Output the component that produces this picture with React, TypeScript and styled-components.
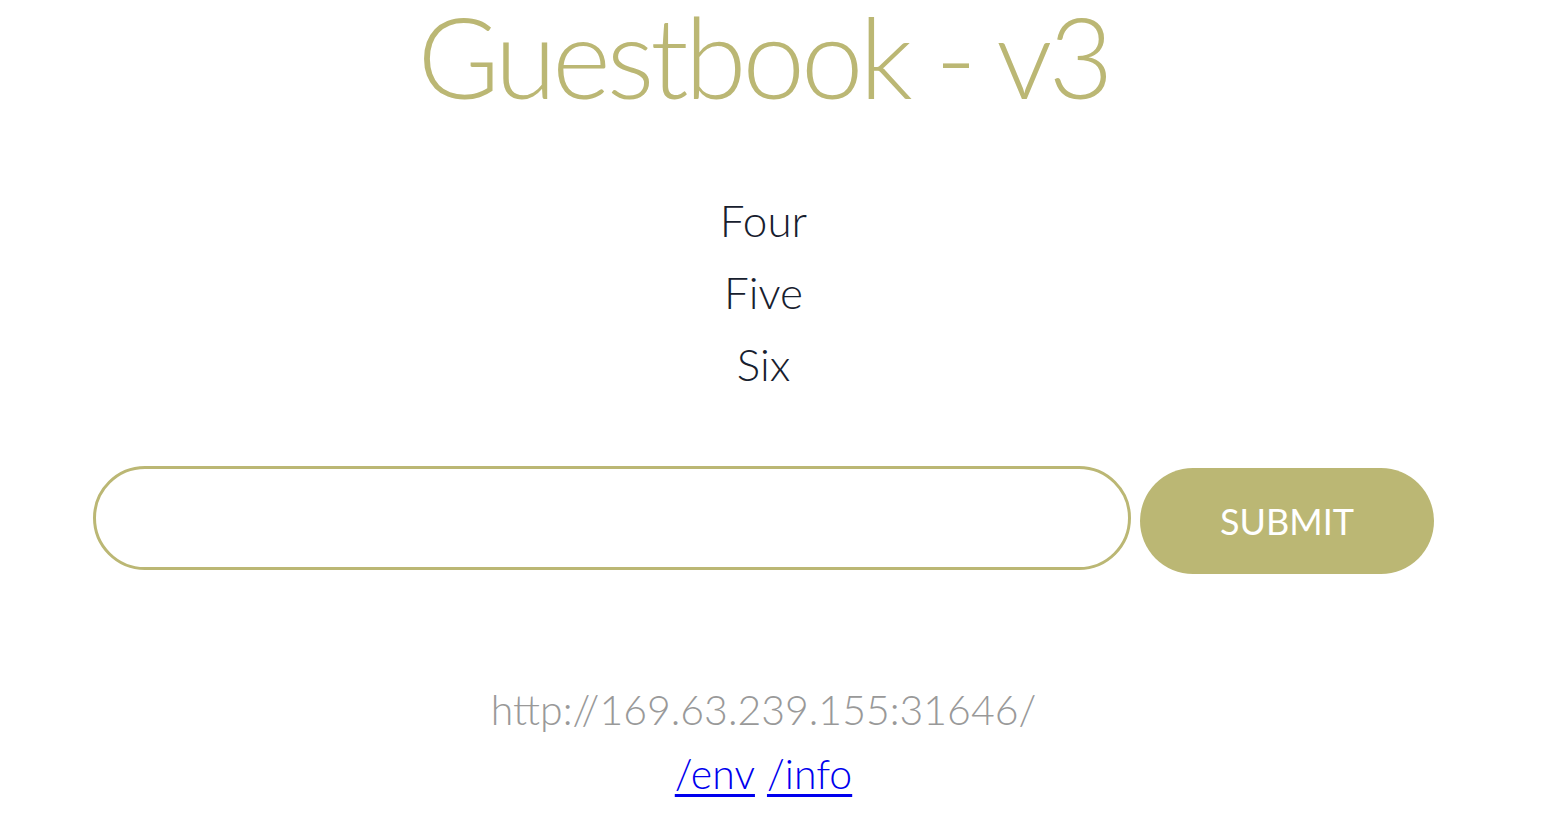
import * as React from 'react';
import styled, { createGlobalStyle } from 'styled-components';

const olive = '#bbb774';

const GlobalStyle = createGlobalStyle`
  html, body {
    margin: 0;
    padding: 0;
    background: #ffffff;
  }
  body {
    font-family: Lato, "Open Sans", sans-serif;
  }
`;

const Page = styled.div`
  width: 1527px;
  display: flex;
  flex-direction: column;
  align-items: center;
`;

const Title = styled.h1`
  margin: 0;
  height: 122px;
  font-size: 112px;
  font-weight: 300;
  line-height: 112px;
  color: ${olive};
  letter-spacing: -4px;
`;

const Entries = styled.div`
  margin-top: 62px;
  display: flex;
  flex-direction: column;
  align-items: center;
`;

const Entry = styled.div`
  font-size: 44px;
  font-weight: 300;
  line-height: 72px;
  color: #17202e;
`;

const Form = styled.form`
  margin-top: 62px;
  display: flex;
  align-items: center;
  gap: 9px;
`;

const Input = styled.input`
  box-sizing: border-box;
  width: 1038px;
  height: 104px;
  border: 3px solid ${olive};
  border-radius: 52px;
  outline: none;
  padding: 0 40px;
  font-family: inherit;
  font-size: 36px;
  background: #fff;
`;

const Button = styled.button`
  box-sizing: border-box;
  width: 294px;
  height: 106px;
  margin-top: 6px;
  border: none;
  border-radius: 53px;
  background: ${olive};
  color: #fff;
  font-family: inherit;
  font-size: 36px;
  font-weight: 400;
  cursor: pointer;
`;

const Footer = styled.div`
  margin-top: 104px;
  display: flex;
  flex-direction: column;
  align-items: center;
`;

const Host = styled.div`
  font-size: 41px;
  font-weight: 300;
  line-height: 64px;
  color: #999999;
`;

const Links = styled.div`
  font-size: 41px;
  font-weight: 300;
  line-height: 64px;
  display: flex;
  gap: 12px;
`;

const Link = styled.a`
  color: #0000ee;
  text-decoration: underline;
  text-decoration-thickness: 3px;
  text-underline-offset: 5px;
`;

const entries = ['Four', 'Five', 'Six'];

export default function App() {
  return (
    <Page>
      <GlobalStyle />
      <Title>Guestbook - v3</Title>
      <Entries>
        {entries.map(e => (
          <Entry key={e}>{e}</Entry>
        ))}
      </Entries>
      <Form onSubmit={ev => ev.preventDefault()}>
        <Input type="text" />
        <Button type="submit">SUBMIT</Button>
      </Form>
      <Footer>
        <Host>http://169.63.239.155:31646/</Host>
        <Links>
          <Link href="#env">/env</Link>
          <Link href="#info">/info</Link>
        </Links>
      </Footer>
    </Page>
  );
}
